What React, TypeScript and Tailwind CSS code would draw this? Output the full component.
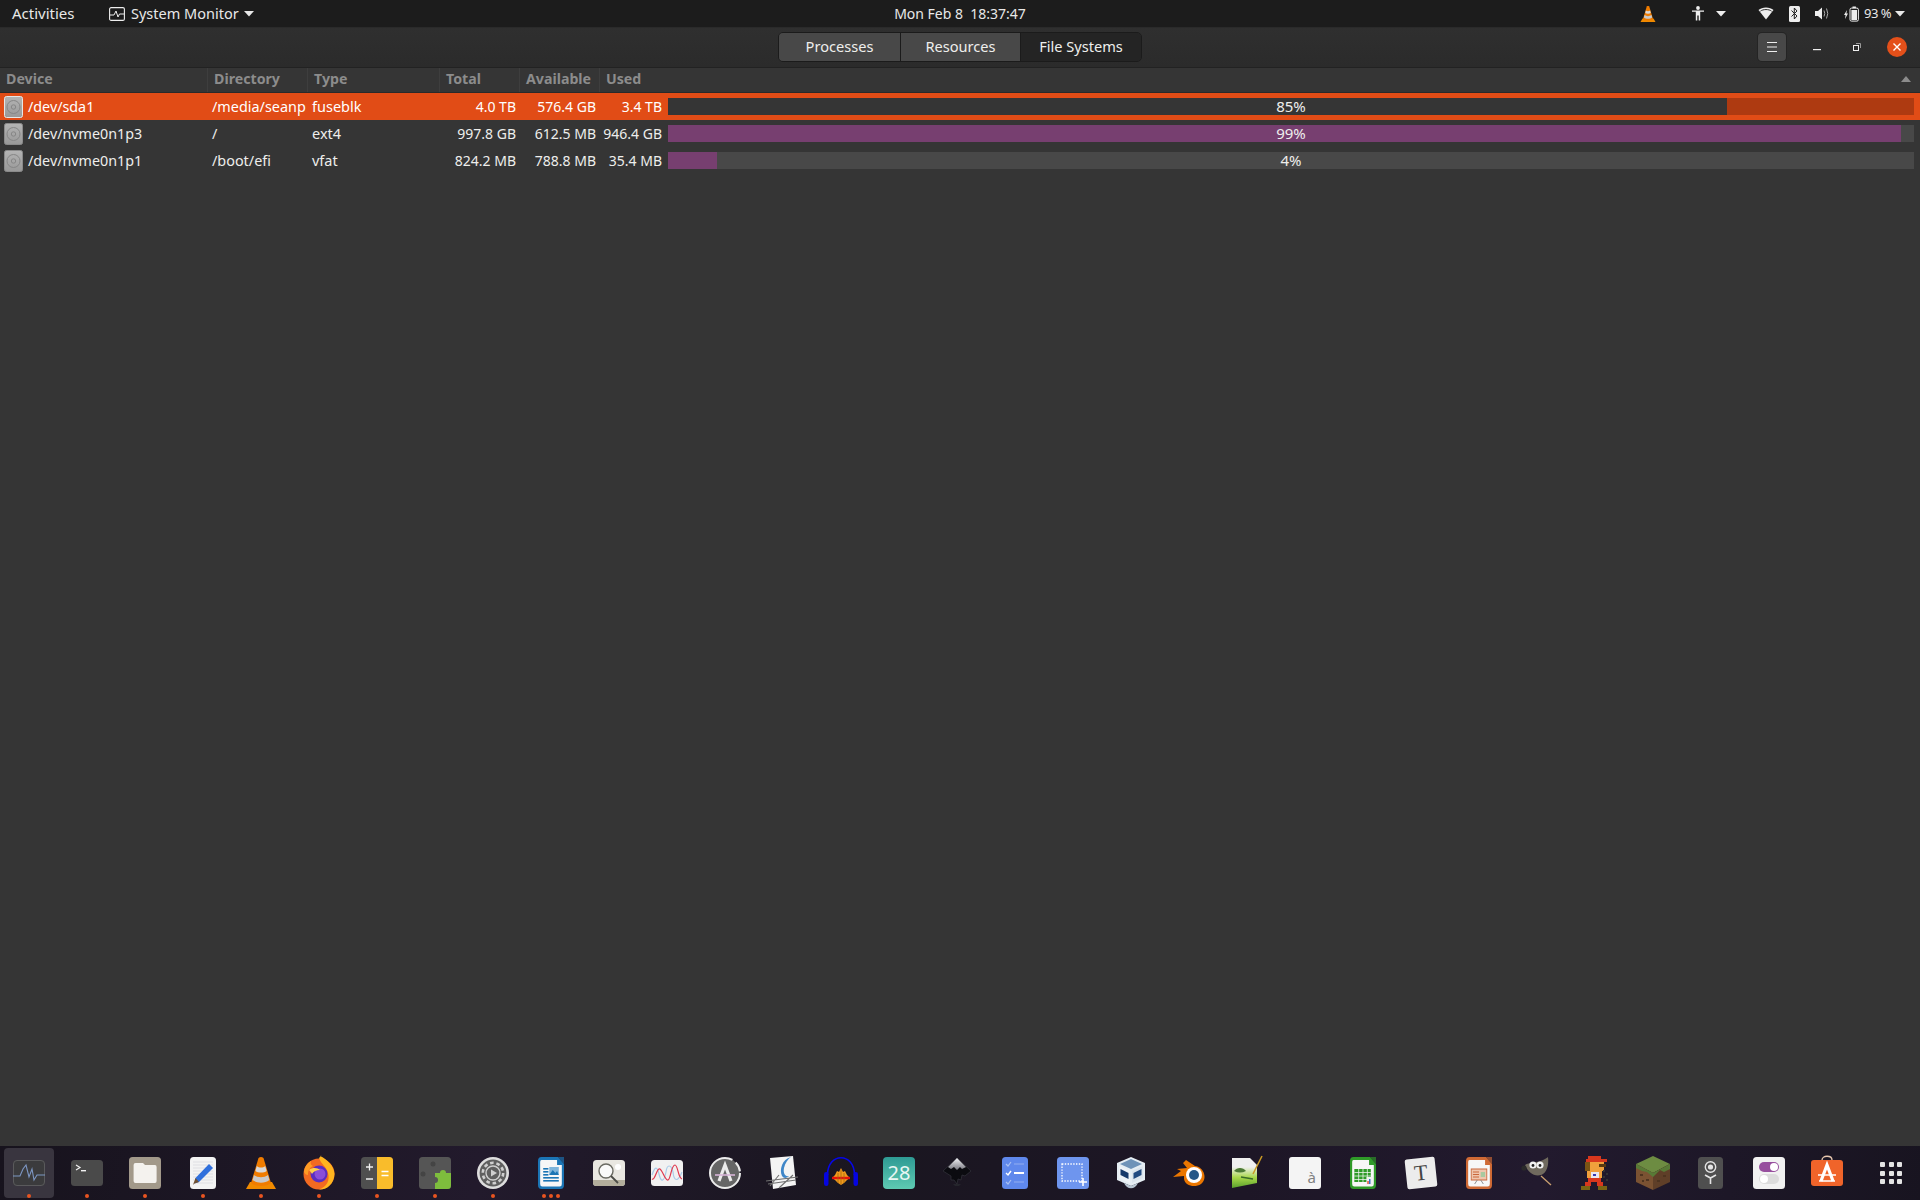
import React from "react";

type Row = { dev: string; dir: string; type: string; total: string; avail: string; used: string; pct: number; sel?: boolean };
const rows: Row[] = [
  { dev: "/dev/sda1", dir: "/media/seanp", type: "fuseblk", total: "4.0 TB", avail: "576.4 GB", used: "3.4 TB", pct: 85, sel: true },
  { dev: "/dev/nvme0n1p3", dir: "/", type: "ext4", total: "997.8 GB", avail: "612.5 MB", used: "946.4 GB", pct: 99 },
  { dev: "/dev/nvme0n1p1", dir: "/boot/efi", type: "vfat", total: "824.2 MB", avail: "788.8 MB", used: "35.4 MB", pct: 4 },
];

const Caret = ({ up = false }: { up?: boolean }) => (
  <svg width="10" height="6" viewBox="0 0 10 6" className="shrink-0">
    <path d={up ? "M0 6 L5 0 L10 6Z" : "M0 0 L10 0 L5 5.5Z"} fill="currentColor" />
  </svg>
);

const Cone = ({ s = 32 }: { s?: number }) => (
  <svg width={s} height={s} viewBox="0 0 32 32" className="overflow-visible">
    <path d="M1 32 L5 25 L27 25 L31 32Z" fill="#f08a00" />
    <path d="M13.5 1 C15 -.2 17 -.2 18.5 1 L26 26 C22 30 10 30 6 26Z" fill="#f07c00" />
    <path d="M11.8 9 C14 11 18 11 20.2 9 L21.6 14 C19 16 13 16 10.4 14Z" fill="#d9d9d9" />
    <path d="M9 18 C13 21 19 21 23 18 L24.4 23 C20 26.5 12 26.5 7.6 23Z" fill="#c9c9c9" />
  </svg>
);

const Doc = ({ c, inner }: { c: string; inner: React.ReactNode }) => (
  <svg width="26" height="32" viewBox="1 0 30 32" preserveAspectRatio="none" className="overflow-visible">
    <path d="M5 0 H24 L31 7 V28 Q31 32 27 32 H5 Q1 32 1 28 V4 Q1 0 5 0Z" fill={c} />
    <path d="M5 3 H23 V8 H28.5 V27 Q28.5 29.5 26 29.5 H6 Q3.5 29.5 3.5 27 V5 Q3.5 3 5 3Z" fill="#f7f7f7" />
    <path d="M24 0 L31 7 V0Z" fill={c} opacity="0.65" />
    {inner}
  </svg>
);

const Tile = ({ c, children, x = 0, w = 32, h = 32 }: { c: string; children?: React.ReactNode; x?: number; w?: number; h?: number }) => (
  <svg width="32" height={h} viewBox={`0 0 32 ${h}`} className="overflow-visible">
    <rect x={x} y={0} width={w} height={h} rx="3.5" fill={c} />
    {children}
  </svg>
);

const mario: [number, number, number, number, string][] = [
  [7, 0, 13, 3, "#d8371d"], [5, 3, 21, 3, "#d8371d"], [4, 6, 5, 9, "#7a5414"], [9, 6, 14, 9, "#f0a03c"], [18, 8, 7, 3, "#5a3a10"],
  [6, 15, 15, 7, "#f0a03c"], [10, 16, 8, 6, "#e8e8f0"], [12, 18, 3, 2, "#3a3ab0"], [7, 22, 13, 4, "#d8371d"], [22, 14, 2, 2, "#333"], [25, 17, 2, 2, "#333"], [22, 20, 2, 2, "#333"], [25, 23, 2, 2, "#333"],
  [4, 26, 6, 4, "#d8371d"], [16, 26, 6, 4, "#d8371d"], [0, 30, 9, 4, "#7a6414"], [17, 30, 9, 4, "#7a6414"],
];

const dockIcons: React.ReactNode[] = [
  <Tile c="#3b3b3d" h={26}>
    <rect x="0.5" y="0.5" width="31" height="25" rx="3.5" fill="none" stroke="#5a5a5c" />
    <path d="M0 16 H7 L10 9 L13 5 L16 17 L19 9 L21 20 L24 15 H32" fill="none" stroke="#7d97c4" strokeWidth="1.1" />
  </Tile>,
  <Tile c="#4a4a4a" h={26}>
    <path d="M5 5 L9 7.5 L5 10" fill="none" stroke="#f2f2f2" strokeWidth="1.2" />
    <rect x="10" y="10" width="5" height="1.4" fill="#f2f2f2" />
  </Tile>,
  <Tile c="#a2998a">
    <path d="M4.6 8 Q4.6 6 6.5 6 H14 L16 8 H26 Q27.6 8 27.6 10 V24 Q27.6 26 26 26 H6.5 Q4.6 26 4.6 24Z" fill="#f4f2ee" />
  </Tile>,
  <Tile c="#f3f3f3" x={3} w={26}>
    <g stroke="#d9d9de" strokeWidth="0.8">
      <path d="M6 5H26M6 8H26M6 11H26M6 14H26M6 17H26M6 20H26M6 23H26M6 26H26" />
    </g>
    <path d="M22 7 L26 11 L12 25 L7.5 26.5 L8.5 21Z" fill="#2f6fdc" />
    <path d="M8.5 21 L12 25 L7.5 26.5 L6 28Z" fill="#705030" />
  </Tile>,
  <Cone />,
  <svg width="32" height="32" viewBox="0 0 32 32" className="overflow-visible">
    <circle cx="16" cy="17" r="15.5" fill="#f26a21" />
    <path d="M16 1 C20 -3 18 -1 17 -1 C24 2 31 9 31.5 17 C31 27 24 33 16 32.5 C24 30 27 23 25 16 C23 9 18 7 16 1Z" fill="#ffb51f" />
    <path d="M1 15 C2 8 5 6 8 4 C7 7 8 8 10 9 C6 11 5 14 5 18 C3 18 2 17 1 15Z" fill="#ff9c24" />
    <circle cx="16" cy="17" r="8.5" fill="#5a2ec0" />
    <circle cx="17" cy="17" r="5.5" fill="#8a4ed8" />
    <path d="M6 13 C10 10 15 11 17 13 C13 13 10 15 9 17 C8 15 7 14 6 13Z" fill="#ffd04a" />
  </svg>,
  <svg width="32" height="32" viewBox="0 0 32 32">
    <path d="M3.5 0 H16 V32 H3.5 Q0 32 0 28.5 V3.5 Q0 0 3.5 0Z" fill="#4f4f4f" />
    <path d="M16 0 H28.5 Q32 0 32 3.5 V28.5 Q32 32 28.5 32 H16Z" fill="#f9bc2b" />
    <path d="M5 10H12M8.5 6.5V13.5M5 22H12" stroke="#f0f0f0" strokeWidth="1.3" />
    <path d="M20.5 14.5H27.5M20.5 18.5H27.5" stroke="#fff" strokeWidth="1.3" />
  </svg>,
  <svg width="32" height="32" viewBox="0 0 32 32">
    <path d="M3.5 0 H28.5 Q32 0 32 3.5 V28.5 Q32 32 28.5 32 H3.5 Q0 32 0 28.5 V3.5 Q0 0 3.5 0Z" fill="#555" />
    <path d="M16 16 H21 A3 3 0 1 1 27 16 H32 V28.5 Q32 32 28.5 32 H16 V26 A3 3 0 1 0 16 20Z" fill="#7ebd3d" />
    <circle cx="14" cy="7" r="2.5" fill="#444" /><circle cx="4" cy="17" r="2.5" fill="#444" />
  </svg>,
  <svg width="32" height="32" viewBox="0 0 32 32">
    <circle cx="16" cy="16" r="16" fill="#dedede" />
    <circle cx="16" cy="16" r="13.4" fill="#5f5f5f" />
    <circle cx="16" cy="16" r="10.2" fill="none" stroke="#cfcfcf" strokeWidth="2.6" strokeDasharray="3.6 2.8" />
    <circle cx="16" cy="16" r="7" fill="none" stroke="#cfcfcf" strokeWidth="1.4" />
    <path d="M14 12.5 L20 16 L14 19.5Z" fill="#cfcfcf" />
  </svg>,
  <Doc c="#1b75b5" inner={<g>
    <rect x="7" y="11" width="6" height="1.6" fill="#1b75b5" /><rect x="7" y="14" width="6" height="1.6" fill="#1b75b5" /><rect x="7" y="17" width="6" height="1.6" fill="#1b75b5" />
    <rect x="14" y="10" width="11" height="8" fill="#7fb5db" /><path d="M14 18 L18 13 L21 16 L23 14 L25 18Z" fill="#1b75b5" />
    <rect x="7" y="20" width="18" height="1.6" fill="#1b75b5" /><rect x="7" y="23" width="18" height="1.6" fill="#1b75b5" />
  </g>} />,
  <Tile c="#e9e7e1" h={26}>
    <path d="M0 20 H32 V22.5 Q32 26 28.5 26 H3.5 Q0 26 0 22.5Z" fill="#b3ae9c" />
    <circle cx="13" cy="11" r="7" fill="#fafafa" stroke="#6a6a62" strokeWidth="1.4" />
    <path d="M18 16 L25 23" stroke="#4b4b45" strokeWidth="1.8" />
    <circle cx="25" cy="7" r="3" fill="#fff" />
  </Tile>,
  <Tile c="#f1f1f1" h={26}>
    <path d="M1 15 C4 6 6 6 8 14 C10 23 13 22 15 12 C16 4 20 4 22 12 C23 22 27 22 31 12" fill="none" stroke="#a9cbe8" strokeWidth="1.2" />
    <path d="M1 19 C4 21 6 7 9 9 C12 11 14 21 17 20 C20 19 20 5 24 5 C27 5 27 18 31 19" fill="none" stroke="#e0384d" strokeWidth="1.2" />
  </Tile>,
  <svg width="32" height="32" viewBox="0 0 32 32">
    <circle cx="16" cy="16" r="15" fill="#666" stroke="#ececec" strokeWidth="2" strokeDasharray="78 4 10 2" />
    <path d="M10 24 L16 8 L22 24" fill="none" stroke="#ececec" strokeWidth="3.2" />
    <path d="M6 18 H26" stroke="#d8b4d8" strokeWidth="1.6" />
  </svg>,
  <svg width="32" height="32" viewBox="0 0 32 32" className="overflow-visible">
    <path d="M3 1 L26 -1 L29 28 L6 32Z" fill="#f4f4f4" />
    <path d="M24 0 C15 2 12 13 15 19 C17 22 20 21 22 19 C18 20 16 16 17 11 C18 6 21 2 24 0Z" fill="#3f86c8" />
    <path d="M-1 24 L31 20 M1 27 L29 23 M3 29 L12 18 M12 31 L26 18" stroke="#707070" strokeWidth="1.1" />
  </svg>,
  <svg width="34" height="32" viewBox="0 0 34 32" className="overflow-visible">
    <path d="M3.5 18 C3.5 -5 30.5 -5 30.5 18" fill="none" stroke="#0707e8" strokeWidth="1.6" />
    <rect x="0" y="15" width="4.5" height="14" rx="2.2" fill="#0505e0" /><rect x="29.5" y="15" width="4.5" height="14" rx="2.2" fill="#0505e0" />
    <path d="M17 11 L19 15 L21 14 L23 18 L26 21 L23 23 L20 26 L17 28 L14 26 L11 23 L8 21 L11 18 L13 14 L15 15Z" fill="#f29a1c" />
    <path d="M8 21 H26" stroke="#e8120c" strokeWidth="2.4" />
    <path d="M14 16 V26 M17 13 V28 M20 16 V26" stroke="#a66a10" strokeWidth="0.8" />
  </svg>,
  <div className="flex h-8 w-8 items-center justify-center rounded-[4px] bg-[linear-gradient(#2e9a94,#5ecab2)] text-[20px] leading-none text-[#e8f7f4]">28</div>,
  <svg width="28" height="30" viewBox="0 0 28 30" className="overflow-visible">
    <defs>
      <linearGradient id="ink" x1="0" y1="0" x2="0" y2="1"><stop offset="0" stopColor="#f4f4f8" /><stop offset="1" stopColor="#77777f" /></linearGradient>
    </defs>
    <path d="M14 0 L28 13 L22 18 L19 17 L18 22 L15 21 L14 26 L11 22 L8 22 L8 18 L0 13Z" fill="#0b0b10" stroke="#34343c" strokeWidth="0.7" />
    <path d="M14 0 L23 9 L19 11 L17 9 L14 12 L11 9 L8 11 L5 9Z" fill="url(#ink)" />
    <path d="M10 26 H18 L16 28 H12Z" fill="#25252c" />
  </svg>,
  <Tile c="#5f88ec" x={3} w={26}>
    <path d="M7 7 L9 9 L12 5M7 25 L9 27 L12 23" fill="none" stroke="#a9c0f3" strokeWidth="1.2" />
    <path d="M7 16 L9 18 L12 14" fill="none" stroke="#fff" strokeWidth="1.4" />
    <path d="M15 7H25M15 25H25" stroke="#93aeef" strokeWidth="1.2" />
    <path d="M15 16H25" stroke="#fff" strokeWidth="2" />
  </Tile>,
  <Tile c="#6e95ee">
    <rect x="5" y="7" width="20" height="17" fill="none" stroke="#fff" strokeWidth="1.3" strokeDasharray="1.4 1.4" />
    <path d="M26 21V29M22 25H30" stroke="#fff" strokeWidth="1.6" />
  </Tile>,
  <svg width="28" height="32" viewBox="0 0 28 32" className="overflow-visible">
    <path d="M14 0 L28 6 V23 L14 29 L0 23 V6Z" fill="#e5edf3" />
    <path d="M14 2 L25 7 L14 12 L3 7Z" fill="#6f93b8" />
    <path d="M2 9 L13 14 V26 L2 21Z" fill="#eef2f6" />
    <path d="M3.5 12 L11.5 16 V22 L3.5 18Z" fill="#17396a" />
    <path d="M15 14 L26 9 V21 L15 26Z" fill="#dbe4ec" />
    <path d="M16.5 16 L24.5 12 V18 L16.5 22Z" fill="#214a80" />
    <path d="M7 26 C10 33 18 33 21 26 L14 29Z" fill="#b8c6d2" />
  </svg>,
  <svg width="34" height="28" viewBox="0 0 34 28" className="overflow-visible">
    <path d="M14 1 L23 7 C32 8 36 20 29 25 C23 29 13 27 12 20 L12 17 L1 18 L9 12 L5 10 L15 9 L11 4Z" fill="#ea7600" />
    <circle cx="22" cy="16" r="8" fill="#fff" />
    <circle cx="22" cy="16" r="5" fill="#265787" />
  </svg>,
  <svg width="32" height="32" viewBox="0 0 32 32" className="overflow-visible">
    <defs>
      <linearGradient id="note" x1="0" y1="0" x2="0" y2="1"><stop offset="0.3" stopColor="#efefef" /><stop offset="0.65" stopColor="#a8d84a" /><stop offset="1" stopColor="#5aa02c" /></linearGradient>
    </defs>
    <path d="M1 1 H19 L26 8 V26 L1 31Z" fill="url(#note)" />
    <path d="M3 14 C6 10 12 10 15 14 C11 16 7 16 3 14Z" fill="#4d7a35" />
    <path d="M10 20 L22 22" stroke="#3a6a28" strokeWidth="1.6" />
    <path d="M22 17 L31 -1" stroke="#c99a25" strokeWidth="1.6" />
  </svg>,
  <div className="flex h-8 w-8 items-end justify-end rounded-[3px] bg-[#f4f4f4] pb-[4px] pr-[5px] text-[15px] leading-none text-[#808080]">à</div>,
  <Doc c="#2f9a28" inner={<g>
    <rect x="6" y="12" width="19" height="13" fill="#2f9a28" />
    <path d="M6 15.5H25M6 19H25M6 22.5H25M11 12V25M16 12V25M21 12V25" stroke="#f7f7f7" strokeWidth="0.8" />
    <rect x="20" y="20" width="7" height="8" fill="#f0f0f0" /><rect x="21" y="24" width="1.6" height="3" fill="#e24a2a" /><rect x="23" y="22" width="1.6" height="5" fill="#2a6ac4" />
  </g>} />,
  <div className="flex h-[30px] w-[30px] rotate-[-6deg] items-center justify-center rounded-[2px] bg-[#ececec] font-['Liberation_Serif',serif] text-[22px] leading-none text-[#444]">T</div>,
  <Doc c="#cf6a35" inner={<g>
    <rect x="7" y="12" width="18" height="11" fill="#efc6ae" stroke="#c9673a" strokeWidth="1" />
    <path d="M9 15H16M9 17.5H16M9 20H16" stroke="#c9673a" strokeWidth="1.2" />
    <rect x="18" y="15" width="5" height="5" fill="#a9c9a0" />
    <path d="M14 23 L11 27M18 23 L21 27" stroke="#888" strokeWidth="1" />
  </g>} />,
  <svg width="32" height="32" viewBox="0 0 32 32" className="overflow-visible">
    <path d="M4 8 C8 5 16 6 22 3 C24 2 26 1 27 0 C28 8 26 16 20 18 C13 20 7 15 4 8Z" fill="#706a5e" />
    <circle cx="3" cy="11" r="2.6" fill="#2a2a2a" />
    <circle cx="12" cy="8" r="3.6" fill="#f2f2f2" /><circle cx="19" cy="8" r="3.6" fill="#f2f2f2" />
    <circle cx="12" cy="8.5" r="1.4" fill="#222" /><circle cx="19" cy="8.5" r="1.4" fill="#222" />
    <path d="M20 19 L30 28" stroke="#caa070" strokeWidth="1.3" />
  </svg>,
  <svg width="28" height="34" viewBox="0 0 28 34" className="overflow-visible" shapeRendering="crispEdges">
    {mario.map(([x, y, w, h, c], i) => <rect key={i} x={x} y={y} width={w} height={h} fill={c} />)}
  </svg>,
  <svg width="34" height="34" viewBox="0 0 34 34" className="overflow-visible">
    <path d="M17 0 L34 8 L17 17 L0 8Z" fill="#6d8c42" />
    <path d="M0 8 L17 17 V34 L0 26Z" fill="#7a5232" />
    <path d="M34 8 L17 17 V34 L34 26Z" fill="#5f3f28" />
    <path d="M0 8 L17 17 L34 8 V13 L28 16 L24 14 L17 21 L11 16 L6 15 L0 12Z" fill="#587a36" />
    <path d="M4 18h3v2h-3zM10 23h3v2h-3zM21 24h3v2h-3zM27 19h3v2h-3zM6 24h2v2h-2z" fill="#4e3420" />
  </svg>,
  <Tile c="#4f4f4f" x={3} w={25}>
    <circle cx="15.5" cy="10" r="5.2" fill="none" stroke="#e4e4e4" strokeWidth="1.4" />
    <circle cx="15.5" cy="10" r="2.6" fill="#e4e4e4" />
    <path d="M15.5 20 V27 M10 18 L15.5 21 L21 18" fill="none" stroke="#e4e4e4" strokeWidth="1.6" />
  </Tile>,
  <Tile c="#f1f1f1">
    <rect x="6" y="5" width="20" height="10" rx="5" fill="#974f9e" /><circle cx="21" cy="10" r="4" fill="#fff" />
    <rect x="6" y="17" width="20" height="10" rx="5" fill="#dcdcdc" /><circle cx="11" cy="22" r="4" fill="#fff" />
  </Tile>,
  <svg width="32" height="32" viewBox="0 0 32 32" className="overflow-visible">
    <path d="M11 3 C11 -2 21 -2 21 3" fill="none" stroke="#e8c8b0" strokeWidth="1.3" />
    <rect x="0" y="3" width="32" height="26" rx="3" fill="#f0642a" />
    <path d="M10 24 L16 8 L22 24" fill="none" stroke="#fff" strokeWidth="3.2" />
    <path d="M7 18 H25 M8 24 H24" stroke="#fff" strokeWidth="1.6" />
  </svg>,
];

const dots: Record<number, number> = { 0: 1, 1: 1, 2: 1, 3: 1, 4: 1, 5: 1, 6: 1, 7: 1, 8: 1, 9: 3 };

export default function App() {
  return (
    <div className="flex h-[1200px] w-[1920px] flex-col overflow-hidden bg-[#353535] font-['Noto_Sans','Open_Sans',sans-serif] text-[14px] text-[#eeeeec]">
      {/* Top bar */}
      <div className="grid h-[27px] shrink-0 grid-cols-[1fr_auto_1fr] items-center bg-[#1c1c1c] text-[#e8e8e8]">
        <div className="flex items-center">
          <span className="ml-3 w-[97px] text-[15px]">Activities</span>
          <svg width="16" height="14" viewBox="0 0 16 14" className="mr-[6px]">
            <rect x="0.6" y="0.6" width="14.8" height="12.8" rx="1.5" fill="none" stroke="#eee" strokeWidth="1.1" />
            <path d="M1 8 H5 L7 4 L9 10 L10.5 7 H15" fill="none" stroke="#eee" strokeWidth="1" />
          </svg>
          <span className="text-[14.5px]">System Monitor</span>
          <span className="ml-[5px]"><Caret /></span>
        </div>
        <div className="whitespace-pre">Mon Feb 8  18:37:47</div>
        <div className="flex items-center justify-end">
          <Cone s={16} />
          <svg width="12" height="15" viewBox="0 0 12 15" className="ml-[36px]">
            <circle cx="6" cy="2" r="1.9" fill="#eee" />
            <path d="M0 4.5 H12 V5.8 H8.2 V14.5 H6.7 V9.5 H5.3 V14.5 H3.8 V5.8 H0Z" fill="#eee" />
          </svg>
          <span className="ml-[12px] text-[#eee]"><Caret /></span>
          <svg width="16" height="13" viewBox="0 0 16 13" className="ml-[32px]">
            <path d="M8 12.5 L0.5 3 C4 -0.5 12 -0.5 15.5 3Z" fill="#eee" />
            <path d="M2.4 4.2 C5 2 11 2 13.6 4.2" fill="none" stroke="#1c1c1c" strokeWidth="0.9" />
          </svg>
          <div className="ml-[15px] flex h-4 w-[11px] items-center justify-center rounded-[1.5px] bg-[#eee]">
            <svg width="7" height="13" viewBox="0 0 7 13"><path d="M0.5 3.5 L6 9 L3.3 12 V1 L6 4 L0.5 9.5" fill="none" stroke="#222" strokeWidth="1" /></svg>
          </div>
          <svg width="15" height="13" viewBox="0 0 15 13" className="ml-[15px]">
            <path d="M0 4 H3 L7 0.5 V12.5 L3 9 H0Z" fill="#eee" />
            <path d="M9 3.5 Q10.5 6.5 9 9.5 M11.5 1.5 Q14 6.5 11.5 11.5" fill="none" stroke="#aaa" strokeWidth="1" />
          </svg>
          <svg width="15" height="16" viewBox="0 0 15 16" className="ml-[14px]">
            <path d="M3 4 L0 9 H1.6 L1 13 L4 7.5 H2.4Z" fill="#eee" />
            <rect x="6" y="2.1" width="8.4" height="13" rx="1.5" fill="none" stroke="#eee" strokeWidth="1" />
            <rect x="8.5" y="0.5" width="3.4" height="1.6" fill="#eee" />
            <rect x="7.4" y="4" width="5.6" height="10" fill="#eee" />
          </svg>
          <span className="ml-[5px] w-[26px] whitespace-pre text-[13px] tracking-[-0.5px] text-[#e8e8e8]">93 %</span>
          <span className="ml-[5px] mr-[15px]"><Caret /></span>
        </div>
      </div>

      {/* Header bar */}
      <div className="grid h-[41px] shrink-0 grid-cols-[1fr_auto_1fr] items-center border-t border-b border-t-[#2a2a2a] border-b-[#222222] bg-[linear-gradient(#2f2f2f,#2b2b2b)] pb-px">
        <div />
        <div className="flex h-[30px] overflow-hidden rounded-[5px] border border-[#1b1b1b] text-[14.6px]">
          <div className="flex w-[122px] items-center justify-center border-r border-[#1b1b1b] bg-[#484848]">Processes</div>
          <div className="flex w-[120px] items-center justify-center border-r border-[#1b1b1b] bg-[#484848]">Resources</div>
          <div className="flex w-[120px] items-center justify-center bg-[#242424]">File Systems</div>
        </div>
        <div className="flex items-center justify-end">
          <div className="flex h-[28px] w-[28px] items-center justify-center rounded-[4px] bg-[#484848] shadow-[0_0_0_1px_#242424]">
            <svg width="12" height="10" viewBox="0 0 12 10"><path d="M1 .5H11M1 5H11M1 9.5H11" stroke="#eee" strokeWidth="1" /></svg>
          </div>
          <svg width="8" height="2" viewBox="0 0 8 2" className="ml-[27px] mt-[5px]"><rect width="8" height="1.2" fill="#eee" /></svg>
          <svg width="8" height="8" viewBox="0 0 8 8" className="ml-[32px]"><rect x="0.5" y="2.5" width="5" height="5" fill="none" stroke="#eee" /><path d="M3 .5H7.5V5" fill="none" stroke="#999" /></svg>
          <div className="ml-[26px] mr-[13px] flex h-5 w-5 items-center justify-center rounded-full bg-[#e4501a]">
            <svg width="8" height="8" viewBox="0 0 8 8"><path d="M.5 .5L7.5 7.5M7.5 .5L.5 7.5" stroke="#fff" strokeWidth="1.4" /></svg>
          </div>
        </div>
      </div>

      {/* Table */}
      <div className="grow">
        <div className="flex h-[25px] items-center border-b border-[#2a2a2a] bg-[#353535] text-[14.2px] font-bold text-[#8c8c8c]">
          <div className="flex h-full w-[208px] items-center border-r border-[#3e3e3e] pb-[2px] pl-[6px]">Device</div>
          <div className="flex h-full w-[100px] items-center border-r border-[#3e3e3e] pb-[2px] pl-[6px]">Directory</div>
          <div className="flex h-full w-[132px] items-center border-r border-[#3e3e3e] pb-[2px] pl-[6px]">Type</div>
          <div className="flex h-full w-[80px] items-center border-r border-[#3e3e3e] pb-[2px] pl-[6px]">Total</div>
          <div className="flex h-full w-[80px] items-center border-r border-[#3e3e3e] pb-[2px] pl-[6px]">Available</div>
          <div className="flex h-full grow items-center justify-between pb-[2px] pl-[6px] pr-[9px]">
            <span>Used</span>
            <Caret up />
          </div>
        </div>
        {rows.map((r) => (
          <div key={r.dev} className={`flex h-[27px] items-center ${r.sel ? "bg-[#e14c16] text-white" : "text-[#eeeeec]"}`}>
            <div className="flex w-[208px] items-center pl-1">
              <svg width="20" height="22" viewBox="0 0 20 22" className="shrink-0">
                <defs>
                  <linearGradient id="disk" x1="0" y1="0" x2="0" y2="1"><stop offset="0" stopColor="#b4b4b4" /><stop offset="1" stopColor="#989898" /></linearGradient>
                </defs>
                <rect x="0.5" y="0.5" width="18" height="21" rx="2" fill="url(#disk)" stroke={r.sel ? "#e6e6e6" : "#8a8a8a"} />
                <circle cx="9.5" cy="11" r="6.5" fill="none" stroke="#868686" />
                <circle cx="9.5" cy="11" r="2.2" fill="none" stroke="#868686" />
              </svg>
              <span className="ml-1 text-[14.3px]">{r.dev}</span>
            </div>
            <div className="w-[100px] whitespace-nowrap pl-1 text-[14.4px]">{r.dir}</div>
            <div className="w-[132px] pl-1 text-[14.5px]">{r.type}</div>
            <div className="w-[80px] pr-1 text-right">{r.total}</div>
            <div className="w-[80px] pr-1 text-right">{r.avail}</div>
            <div className="w-[66px] pr-[4px] text-right">{r.used}</div>
            <div className={`relative ml-[2px] h-[17px] w-[1246px] ${r.sel ? "bg-[#ae3a11]" : "bg-[#484848]"}`}>
              <div className={`h-full ${r.sel ? "bg-[#353535]" : "bg-[#773f70]"}`} style={{ width: `${Math.floor((1246 * r.pct) / 100)}px` }} />
              <div className="absolute inset-0 flex items-center justify-center text-[15px] text-[#eeeeec]">{r.pct}%</div>
            </div>
          </div>
        ))}
      </div>

      {/* Dock */}
      <div className="flex h-[54px] shrink-0 bg-[#1a1520] bg-[linear-gradient(100deg,#17131d_0%,#221a2c_25%,#1a1620_45%,#1d1626_65%,#221a2e_80%,#181420_100%)]">
        {dockIcons.map((icon, i) => (
          <div key={i} className="relative flex h-full w-[58px] shrink-0 items-center justify-center">
            {i === 0 && <div className="absolute inset-x-1 inset-y-[2px] rounded-[4px] bg-[#39353f]" />}
            <div className="relative flex items-center justify-center">{icon}</div>
            {dots[i] && (
              <div className="absolute bottom-[2px] left-0 right-0 flex justify-center gap-[3px]">
                {Array.from({ length: dots[i] }).map((_, k) => (
                  <span key={k} className="h-1 w-1 rounded-full bg-[#e95420]" />
                ))}
              </div>
            )}
          </div>
        ))}
        <div className="ml-auto flex h-full w-[58px] items-center justify-center">
          <div className="grid grid-cols-3 gap-[3.5px]">
            {Array.from({ length: 9 }).map((_, i) => (
              <span key={i} className="h-[5px] w-[5px] rounded-[1px] bg-[#e4e4e4]" />
            ))}
          </div>
        </div>
      </div>
    </div>
  );
}
